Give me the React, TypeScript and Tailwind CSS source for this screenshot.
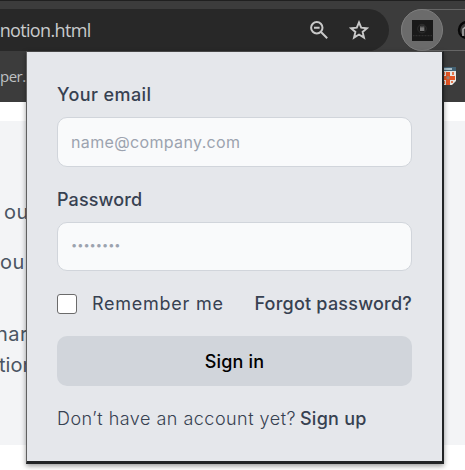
import React from 'react';

const inputClass =
  "block w-full rounded-[10px] border border-[#d1d5db] bg-[#f9fafb] px-[13px] text-[#374151] outline-none placeholder:text-[#9ca3af] placeholder:opacity-100";

function ZoomOutIcon() {
  return (
    <svg width="20" height="20" viewBox="0 0 20 20" fill="none" stroke="#c9c9c9" strokeWidth="2">
      <circle cx="7.8" cy="7.7" r="5.7" />
      <path d="M12 12 18.2 18.2M5 7.7h5.6" />
    </svg>
  );
}

function StarIcon() {
  return (
    <svg width="20" height="20" viewBox="0 0 20 20" fill="none" stroke="#c9c9c9" strokeWidth="1.9">
      <path d="m10 2.4 2.2 5.3 5.8.5-4.4 3.7 1.4 5.7-5-3.1-5 3.1 1.4-5.7L2 8.2l5.8-.5Z" />
    </svg>
  );
}

function ExtensionIcon() {
  return (
    <svg width="21" height="21" viewBox="0 0 21 21">
      <rect width="21" height="21" fill="#191919" />
      <circle cx="10" cy="8.6" r="4.3" fill="none" stroke="#333" strokeWidth=".8" />
      <path d="M8 7.2h4.4v3.8H8z" fill="#777" />
      <path d="M8.4 7v-.8h3.6V7" stroke="#555" fill="none" />
      <path d="M1 15.7h19" stroke="#353535" strokeDasharray="1 .5" />
    </svg>
  );
}

function CrestIcon() {
  return (
    <svg width="14" height="18" viewBox="0 0 14 18">
      <path d="M0 0h13v14l-4 4H0z" fill="#e9e6e2" />
      <path d="M0 0h13v4H0z" fill="#436274" />
      <path d="M1 2h8" stroke="#c9dce5" strokeWidth="1.5" />
      <path d="M3 5h4v13H3zM0 9h12v4H0z" fill="#e65524" />
      <path d="M0 5h2v3H0zM9 5h2v3H9zM0 14h2v3H0zM8 14h2v2H8z" fill="#e4774e" />
      <circle cx="5" cy="10.7" r="1.7" fill="#a18173" />
    </svg>
  );
}

export default function App() {
  return (
    <div className="relative h-[470px] w-[465px] overflow-hidden bg-white font-['Inter','Liberation_Sans',sans-serif]">
      <header className="h-[102px] border-t border-[#202020] bg-[#3c3c3c] pt-2">
        <div className="flex h-[42px] gap-3">
          <div className="flex w-[389px] shrink-0 items-center rounded-r-full bg-[#282828] pr-[20px]">
            <span className="-ml-[5.5px] flex-1 whitespace-nowrap font-['Open_Sans','Noto_Sans',sans-serif] text-[18px] tracking-[-0.65px] text-[#c9cbcd]">-notion.html</span>
            <span className="mr-5"><ZoomOutIcon /></span>
            <StarIcon />
          </div>
          <div className="flex h-[42px] w-[100px] shrink-0 rounded-l-full border border-[#666]">
            <div className="-ml-px -mt-px flex size-[42px] shrink-0 items-center justify-center rounded-full border border-[#7e7e7e] bg-[#6b6b6b]">
              <ExtensionIcon />
            </div>
            <svg className="ml-[14px] mt-[11px] shrink-0" width="20" height="20" viewBox="0 0 20 20" fill="none">
              <circle cx="10" cy="9" r="8" stroke="#080808" strokeWidth="2.5" />
              <path d="M6 15V8l4-3" stroke="#b0b0b0" strokeWidth="1.5" />
            </svg>
          </div>
        </div>
        <div className="flex h-[50px] items-center justify-between">
          <span className="font-['Open_Sans','Noto_Sans',sans-serif] text-[15px] tracking-[-0.5px] text-[#bfc1c3]">per...</span>
          <span className="mr-[8px]"><CrestIcon /></span>
        </div>
      </header>
      <main className="mt-[19px] h-[324px] overflow-hidden bg-[#f3f4f6] pt-[76px] text-[20px] leading-[30px] text-[#4b5563]">
        <p className="ml-1 tracking-[0.5px]">ou</p>
        <p className="mt-5 tracking-[0.5px]">ou</p>
        <p className="-ml-1 mt-[42px] tracking-[0.5px]">nar</p>
        <p className="-ml-px mt-px">tion</p>
      </main>

      <section className="absolute left-[26px] top-[51px] h-[413px] w-[418px] border-b-[3px] border-l border-r-2 border-t border-b-[#222426] border-l-[#606060] border-r-[#222426] border-t-[#484848] bg-[#e5e7eb] pl-[30px] pr-[30px] pt-[30px] text-[#374151] shadow-[0_2px_5px_rgba(0,0,0,0.4)]">
        <form className="flex flex-col" onSubmit={(event) => event.preventDefault()}>
          <label className="flex h-[25px] items-center text-[18px] font-medium tracking-[0.42px]" htmlFor="email">Your email</label>
          <input className={`${inputClass} mt-[10px] h-[50px] text-[16px] tracking-[0.35px]`} id="email" type="email" placeholder="name@company.com" />
          <label className="mt-[20px] flex h-[25px] items-center text-[18px] font-medium tracking-[0.1px]" htmlFor="password">Password</label>
          <input className={`${inputClass} mt-[10px] h-[49px] pb-[3px] text-[11px]`} id="password" type="password" placeholder="••••••••" />
          <div className="mt-[20px] flex h-[25px] items-center justify-between">
            <label className="flex items-center gap-[15px] text-[18px] tracking-[0.75px]">
              <input type="checkbox" className="size-5 appearance-none rounded-[3px] border border-[#6b6b6b] bg-white" />
              <span className="whitespace-nowrap">Remember me</span>
            </label>
            <a className="whitespace-nowrap text-[18px] font-medium tracking-[0.22px]">Forgot password?</a>
          </div>
          <button className="mt-[20px] h-[50px] rounded-[10px] bg-[#d1d5db] text-[18px] font-medium tracking-[0.15px] text-black" type="submit">Sign in</button>
          <p className="mt-[20px] flex h-[25px] items-center whitespace-nowrap text-[18px] font-light">
            <span className="tracking-[0.48px]">Don’t have an account yet?</span>
            <a className="ml-1 font-medium tracking-[0.25px]">Sign up</a>
          </p>
        </form>
      </section>
    </div>
  );
}
